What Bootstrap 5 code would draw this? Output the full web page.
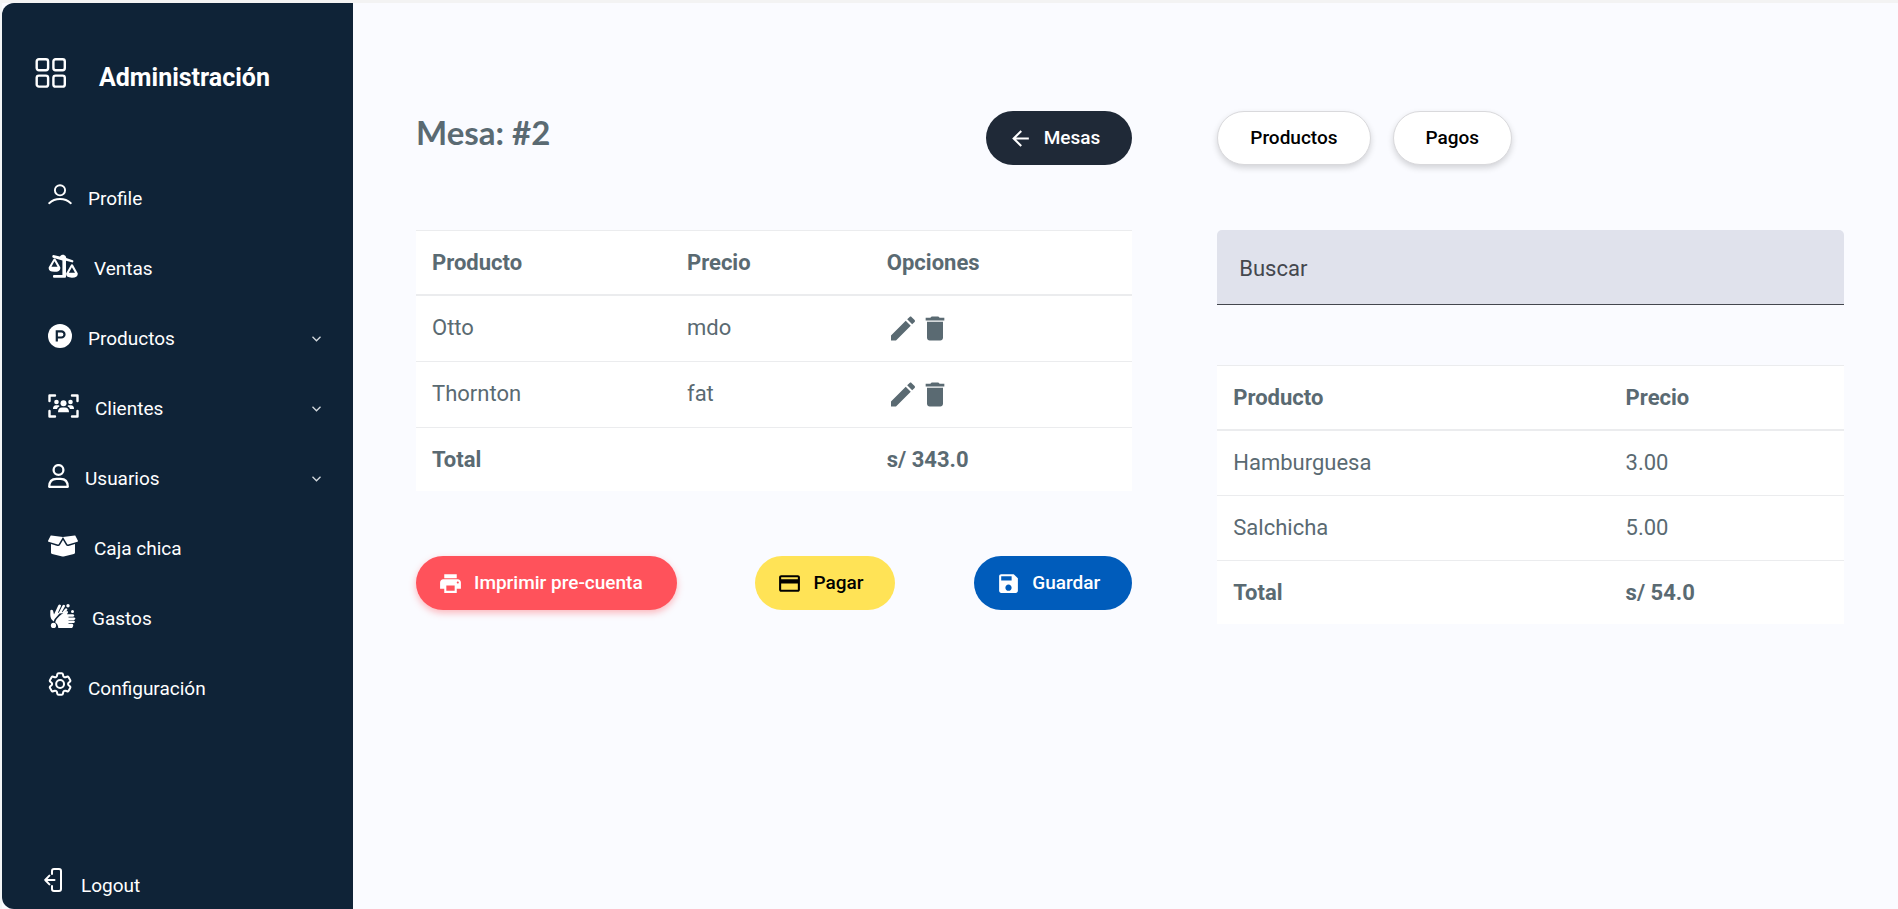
<!DOCTYPE html>
<html lang="es">
<head>
<meta charset="utf-8">
<meta name="viewport" content="width=device-width, initial-scale=1">
<title>Administración - Mesa #2</title>
<link href="https://cdn.jsdelivr.net/npm/bootstrap@5.3.0/dist/css/bootstrap.min.css" rel="stylesheet">
<style>
  :root { --ink: #5a6a72; --navy: #0f2337; --rule: #ebecee; }
  body { font-family: Roboto, "Liberation Sans", sans-serif; background: #fafbff; color: var(--ink); }
  .shell { border-top: 3px solid #f3f3f3; border-left: 2px solid #f3f5f6; }
  .sidebar { width: 351px; background: var(--navy); border-radius: 12px 0 0 12px; color: #fff; }
  .sidebar a { color: #fff; font-size: 19px; line-height: 24px; text-decoration: none; }
  .brand { padding: 48px 33px 0; gap: 32px; height: 161px; }
  .brand span { font-size: 25px; font-weight: 700; line-height: 36px; padding-top: 9px; }
  .menu a { height: 70px; padding: 0 32px 0 45px; gap: 16px; }
  .menu svg.glyph { margin-bottom: 6px; }
  .menu svg.thin, .logout svg { margin-bottom: 11px; }
  .logout { height: 47px; padding-left: 42px; gap: 19px; }
  .panel { padding: 108px 54px 40px 63px; }
  .columns { display: grid; grid-template-columns: 8fr 7fr; gap: 40px 85px; }
  .bar { height: 54px; margin-bottom: 65px; }
  h1 { font-family: Lato, sans-serif; font-size: 33px; font-weight: 700; line-height: 42px; margin: 0; }
  .pill { height: 54px; border-radius: 27px; border: 0; padding: 0 32px 0 22px; gap: 11px; font-size: 19px; font-weight: 500; }
  .pill-plain, .pill-plain:hover { background: #fff; color: #000; border: 1px solid #d9d9dc; padding: 0 32px; }
  .raised { box-shadow: 0 3px 6px rgba(0, 0, 0, .16); }
  .pill-dark, .pill-dark:hover { background: #1f2937; color: #fff; }
  .pill-red, .pill-red:hover { background: #ff525b; color: #fff; box-shadow: 0 3px 7px rgba(255, 82, 91, .4); padding-right: 34px; }
  .pill-yellow, .pill-yellow:hover { background: #ffe356; color: #000; }
  .pill-blue, .pill-blue:hover { background: #005cbb; color: #fff; }
  .tabs { gap: 22px; }
  .actions { margin-top: 65px; gap: 16px; }
  .grid-table { --bs-table-bg: #fff; --bs-table-color: var(--ink); color: var(--ink); font-size: 22px; line-height: 32px; table-layout: fixed; border-collapse: separate; border-spacing: 0; }
  .grid-table > :not(caption) > * > * { padding: 16px; border-bottom: 1px solid var(--rule); vertical-align: top; }
  .grid-table > thead > tr > th { border-top: 1px solid var(--rule); border-bottom: 2px solid var(--rule); padding-bottom: 15px; }
  .grid-table > tfoot > tr > * { border-bottom: 0; padding-bottom: 15px; font-weight: 700; }
  .tool { border: 0; background: none; padding: 0; color: var(--ink); display: block; }
  .search { height: 75px; border: 0; border-bottom: 1px solid #44474e; border-radius: 5px 5px 0 0; background: #e0e2ec; font-size: 22px; padding: 2px 22px 0; margin-bottom: 60px; }
  .search:focus { background: #e0e2ec; }
  .search::placeholder { color: #44474e; opacity: 1; }
  @media (max-width: 1300px) { .columns { grid-template-columns: 1fr; } }
</style>
</head>
<body>
<div class="shell d-flex min-vh-100">
  <nav class="sidebar d-flex flex-column flex-shrink-0" aria-label="Menú principal">
    <div class="brand d-flex align-items-start">
      <svg width="32" height="44" viewBox="0 0 32 44" fill="none" stroke="#fff" stroke-width="2.4"><rect x="1.7" y="8.2" width="11.4" height="11" rx="2.2"/><rect x="18.4" y="8.2" width="11.4" height="11" rx="2.2"/><rect x="1.7" y="24.6" width="11.4" height="11" rx="2.2"/><rect x="18.4" y="24.6" width="11.4" height="11" rx="2.2"/></svg>
      <span>Administración</span>
    </div>
    <ul class="menu list-unstyled m-0">
      <li><a href="#" class="d-flex align-items-center"><svg class="glyph thin" width="25" height="24" viewBox="-1 0 25 24" fill="none" stroke="#fff" stroke-width="1.9" stroke-linecap="round"><circle cx="12" cy="8.3" r="5.1"/><path d="M1.2 21.2C7 15.6 17 15.600 22.800 21.200"/></svg>Profile</a></li>
      <li><a href="#" class="d-flex align-items-center"><svg class="glyph" width="31" height="24" viewBox="-1 0 32 24" fill="#fff"><path d="M5.600 .7 12.300 2.200A3.500 3.500 0 0 1 18.900 3.800L25.600 6q.9.400.6 1.300-.4 1.200-1.500.9L18.600 6.500V23q0 1-1 1H6.200q-1 0-1-1v-.8q0-1 1-1h8.700V6.300L5.200 3.400Q4.200 3 4.500 1.800 4.800.7 5.600.7Z"/><path fill-rule="evenodd" d="M6.800 4.300q.9 0 1.300.9l4.600 8.200q.7 4.600-6 4.600T.8 13.400l4.700-8.200q.4-.9 1.300-.9ZM3.600 12.900h6.300L6.700 7.200ZM24.800 10.300q.9 0 1.300.9l4.600 8.200q.7 4.600-6 4.600t-5.900-4.600l4.700-8.200q.4-.9 1.300-.9ZM21.600 18.900h6.300l-3.200-5.700Z"/></svg>Ventas</a></li>
      <li><a href="#" class="d-flex align-items-center"><svg class="glyph" width="25" height="24" viewBox="-1 0 25 24"><circle cx="12" cy="12" r="12" fill="#fff"/><path d="M8.800 17.600V7.300h4.600a3 3 0 0 1 0 6.200H8.800" fill="none" stroke="#0f2337" stroke-width="2.2"/></svg>Productos<svg class="ms-auto" width="9" height="6" viewBox="0 0 9 6" fill="none" stroke="#d5dade" stroke-width="1.300"><path d="M.5.800 4.500 4.800 8.500.800"/></svg></a></li>
      <li><a href="#" class="d-flex align-items-center"><svg class="glyph" width="32" height="24" viewBox="-1 0 32 24" fill="#fff"><path d="M1.500 7V1.500H7M24 1.500h5.500V7M29.500 17v5.500H24M7 22.500H1.500V17" fill="none" stroke="#fff" stroke-width="2.400" stroke-linecap="round" stroke-linejoin="round"/><circle cx="15.500" cy="9.200" r="3"/><circle cx="8.500" cy="8" r="2.300"/><circle cx="22.500" cy="8" r="2.300"/><path d="M10 18.300q0-4.800 4-4.800h3q4 0 4 4.800ZM5 15Q5 11.300 8 11.300h2.300q.9 0 1.200 1-2.300 1-2.500 2.700ZM26 15Q26 11.300 23 11.300h-2.300q-.9 0-1.200 1 2.300 1 2.500 2.700Z"/></svg>Clientes<svg class="ms-auto" width="9" height="6" viewBox="0 0 9 6" fill="none" stroke="#d5dade" stroke-width="1.300"><path d="M.5.800 4.500 4.800 8.500.800"/></svg></a></li>
      <li><a href="#" class="d-flex align-items-center"><svg class="glyph" width="22" height="24" viewBox="-1 0 22 24" fill="none" stroke="#fff" stroke-width="2.300"><circle cx="10.500" cy="6" r="4.900"/><path d="M1.200 22.800q0-8 7.300-8h4q7.300 0 7.300 8Z" stroke-linejoin="round"/></svg>Usuarios<svg class="ms-auto" width="9" height="6" viewBox="0 0 9 6" fill="none" stroke="#d5dade" stroke-width="1.300"><path d="M.5.800 4.500 4.800 8.500.800"/></svg></a></li>
      <li><a href="#" class="d-flex align-items-center"><svg class="glyph" width="31" height="24" viewBox="-21 0 661 512" fill="#fff"><path d="M425.700 256c-16.900 0-32.800-9-41.400-23.400L320 126l-64.200 106.600c-8.700 14.500-24.600 23.500-41.500 23.500-4.500 0-9-.6-13.300-1.900L64 215v178c0 14.700 10 27.500 24.200 31l216.200 54.100c10.200 2.500 20.900 2.500 31 0L551.800 424c14.200-3.600 24.200-16.400 24.200-31V215l-137 39.100c-4.300 1.300-8.800 1.900-13.300 1.900zm212.600-112.200L586.800 41c-3.100-6.200-9.800-9.800-16.700-8.900L320 64l91.700 152.100c3.800 6.300 11.400 9.300 18.500 7.300l197.900-56.500c9.900-2.900 14.700-13.900 10.200-23.100zM53.200 41L1.700 143.800c-4.600 9.200.3 20.200 10.100 23l197.900 56.500c7.100 2 14.700-1 18.500-7.300L320 64 69.800 32.100c-6.900-.8-13.500 2.700-16.600 8.900z"/></svg>Caja chica</a></li>
      <li><a href="#" class="d-flex align-items-center"><svg class="glyph" width="29" height="24" viewBox="-3 0 29 24" fill="#fff"><circle cx="18" cy="1.800" r="1.700"/><circle cx="22.500" cy="7.500" r="1.500"/><circle cx="3.500" cy="21.400" r="2.600"/><path d="M.3 6.500q1.200-1.300 2.700 0l1 4L8.200 1.600Q9.200-.2 10.700.9q.5.600.2 1.400L8 8.600l.7.3L12.500 1.400Q13.600.1 14.800 1.200q.4.600.1 1.400L11.800 8l.6.300 2.700-3.600q1.100-1 2 .1.400.7 0 1.400L14.500 9 9.500 9.500 4.500 15.300 3.800 17.500Q.5 15.500.3 11Z"/><path d="M12.200 9.800 16.200 7.200q1.700-.4 1.900 1.100L17 10.300h6q1.300.2 1.300 1.200T23 12.700h-4.500v.7h5.700q1.200.2 1.200 1.200t-1.200 1.300h-5.700v.7h5.200q1.200.2 1.200 1.200T23.700 19h-5.200v.7h3.600q1.200.2 1.200 1.300 0 1.500-1.200 3H8.300q-.2-4-3-5.500.2-3.500 6.900-8.700Z"/></svg>Gastos</a></li>
      <li><a href="#" class="d-flex align-items-center"><svg class="glyph thin" width="25" height="24" viewBox="1 2 21 20" fill="none" stroke="#fff" stroke-width="1.700"><circle cx="12" cy="12" r="3.300"/><path d="M9.594 3.940c.09-.542.56-.94 1.110-.94h2.593c.55 0 1.020.398 1.110.94l.213 1.281c.063.374.313.686.645.87.074.04.147.083.22.127.325.196.72.257 1.075.124l1.217-.456a1.125 1.125 0 0 1 1.370.49l1.296 2.247a1.125 1.125 0 0 1-.26 1.431l-1.003.827c-.293.241-.438.613-.43.992a7.723 7.723 0 0 1 0 .255c-.008.378.137.75.43.991l1.004.827c.424.35.534.955.26 1.430l-1.298 2.247a1.125 1.125 0 0 1-1.369.491l-1.217-.456c-.355-.133-.75-.072-1.076.124a6.470 6.470 0 0 1-.22.128c-.331.183-.581.495-.644.869l-.213 1.281c-.09.543-.56.94-1.110.94h-2.594c-.55 0-1.019-.398-1.110-.94l-.213-1.281c-.062-.374-.312-.686-.644-.87a6.520 6.520 0 0 1-.22-.127c-.325-.196-.72-.257-1.076-.124l-1.217.456a1.125 1.125 0 0 1-1.369-.49l-1.297-2.247a1.125 1.125 0 0 1 .26-1.431l1.004-.827c.292-.24.437-.613.43-.991a6.932 6.932 0 0 1 0-.255c.007-.38-.138-.751-.43-.992l-1.004-.827a1.125 1.125 0 0 1-.26-1.430l1.297-2.247a1.125 1.125 0 0 1 1.370-.491l1.216.456c.356.133.751.072 1.076-.124.072-.044.146-.086.22-.128.332-.183.582-.495.644-.869l.214-1.280Z"/></svg>Configuración</a></li>
    </ul>
    <a href="#" class="logout d-flex align-items-center mt-auto"><svg width="18" height="24" viewBox="0 0 18 24" fill="none" stroke="#fff" stroke-width="2" stroke-linecap="round" stroke-linejoin="round"><path d="M8 6V3Q8 1 10 1h5q2 0 2 2v18q0 2-2 2h-5q-2 0-2-2v-3M10.500 12H1.200M5.400 7.600 1.200 12l4.200 4.400"/></svg>Logout</a>
  </nav>

  <main class="panel flex-grow-1">
    <div class="columns">
      <section>
        <div class="bar d-flex justify-content-between align-items-start">
          <h1>Mesa: #2</h1>
          <button type="button" class="btn pill pill-dark d-inline-flex align-items-center"><svg width="25" height="25" viewBox="0 0 24 24" fill="currentColor"><path d="M20 11H7.830l5.590-5.590L12 4l-8 8 8 8 1.410-1.410L7.830 13H20v-2z"/></svg>Mesas</button>
        </div>
        <table class="table grid-table mb-0">
          <colgroup><col style="width:35.6%"><col style="width:27.9%"><col style="width:36.5%"></colgroup>
          <thead><tr><th scope="col">Producto</th><th scope="col">Precio</th><th scope="col">Opciones</th></tr></thead>
          <tbody>
            <tr><td>Otto</td><td>mdo</td><td><div class="d-flex"><button type="button" class="tool" aria-label="Editar Otto"><svg class="d-block" width="32" height="33" viewBox="0 0 24 24" fill="currentColor"><path d="M3 17.250V21h3.750L17.810 9.940l-3.750-3.750L3 17.250zM20.710 7.040c.39-.39.39-1.020 0-1.410l-2.340-2.340c-.39-.39-1.020-.39-1.410 0l-1.830 1.830 3.750 3.750 1.830-1.830z"/></svg></button><button type="button" class="tool" aria-label="Eliminar Otto"><svg class="d-block" width="32" height="33" viewBox="0 0 24 24" fill="currentColor"><path d="M6 19c0 1.100.9 2 2 2h8c1.100 0 2-.9 2-2V7H6v12zM19 4h-3.500l-1-1h-5l-1 1H5v2h14V4z"/></svg></button></div></td></tr>
            <tr><td>Thornton</td><td>fat</td><td><div class="d-flex"><button type="button" class="tool" aria-label="Editar Thornton"><svg class="d-block" width="32" height="33" viewBox="0 0 24 24" fill="currentColor"><path d="M3 17.250V21h3.750L17.810 9.940l-3.750-3.750L3 17.250zM20.710 7.040c.39-.39.39-1.020 0-1.410l-2.340-2.340c-.39-.39-1.020-.39-1.410 0l-1.830 1.830 3.750 3.750 1.830-1.830z"/></svg></button><button type="button" class="tool" aria-label="Eliminar Thornton"><svg class="d-block" width="32" height="33" viewBox="0 0 24 24" fill="currentColor"><path d="M6 19c0 1.100.9 2 2 2h8c1.100 0 2-.9 2-2V7H6v12zM19 4h-3.500l-1-1h-5l-1 1H5v2h14V4z"/></svg></button></div></td></tr>
          </tbody>
          <tfoot><tr><th scope="row">Total</th><td></td><td>s/ 343.0</td></tr></tfoot>
        </table>
        <div class="actions d-flex flex-wrap justify-content-between">
          <button type="button" class="btn pill pill-red d-inline-flex align-items-center"><svg width="25" height="25" viewBox="0 0 24 24" fill="currentColor"><path d="M19 8H5c-1.660 0-3 1.340-3 3v6h4v4h12v-4h4v-6c0-1.660-1.340-3-3-3zm-3 11H8v-5h8v5zm3-7c-.55 0-1-.45-1-1s.45-1 1-1 1 .45 1 1-.45 1-1 1zm-1-9H6v4h12V3z"/></svg>Imprimir pre-cuenta</button>
          <button type="button" class="btn pill pill-yellow d-inline-flex align-items-center"><svg width="25" height="25" viewBox="0 0 24 24" fill="currentColor"><path d="M20 4H4c-1.110 0-1.990.89-1.990 2L2 18c0 1.110.89 2 2 2h16c1.110 0 2-.89 2-2V6c0-1.110-.89-2-2-2zm0 14H4v-6h16v6zm0-10H4V6h16v2z"/></svg>Pagar</button>
          <button type="button" class="btn pill pill-blue d-inline-flex align-items-center"><svg width="25" height="25" viewBox="0 0 24 24" fill="currentColor"><path d="M17 3H5c-1.110 0-2 .9-2 2v14c0 1.100.89 2 2 2h14c1.100 0 2-.9 2-2V7l-4-4zm-5 16c-1.660 0-3-1.340-3-3s1.340-3 3-3 3 1.340 3 3-1.340 3-3 3zm3-10H5V5h10v4z"/></svg>Guardar</button>
        </div>
      </section>

      <section>
        <div class="bar tabs d-flex align-items-start">
          <button type="button" class="btn pill pill-plain raised">Productos</button>
          <button type="button" class="btn pill pill-plain raised">Pagos</button>
        </div>
        <input type="text" class="form-control search" placeholder="Buscar" aria-label="Buscar">
        <table class="table grid-table mb-0">
          <colgroup><col style="width:62.6%"><col style="width:37.4%"></colgroup>
          <thead><tr><th scope="col">Producto</th><th scope="col">Precio</th></tr></thead>
          <tbody>
            <tr><td>Hamburguesa</td><td>3.00</td></tr>
            <tr><td>Salchicha</td><td>5.00</td></tr>
          </tbody>
          <tfoot><tr><th scope="row">Total</th><td>s/ 54.0</td></tr></tfoot>
        </table>
      </section>
    </div>
  </main>
</div>
<script src="https://cdn.jsdelivr.net/npm/bootstrap@5.3.0/dist/js/bootstrap.bundle.min.js"></script>
</body>
</html>
